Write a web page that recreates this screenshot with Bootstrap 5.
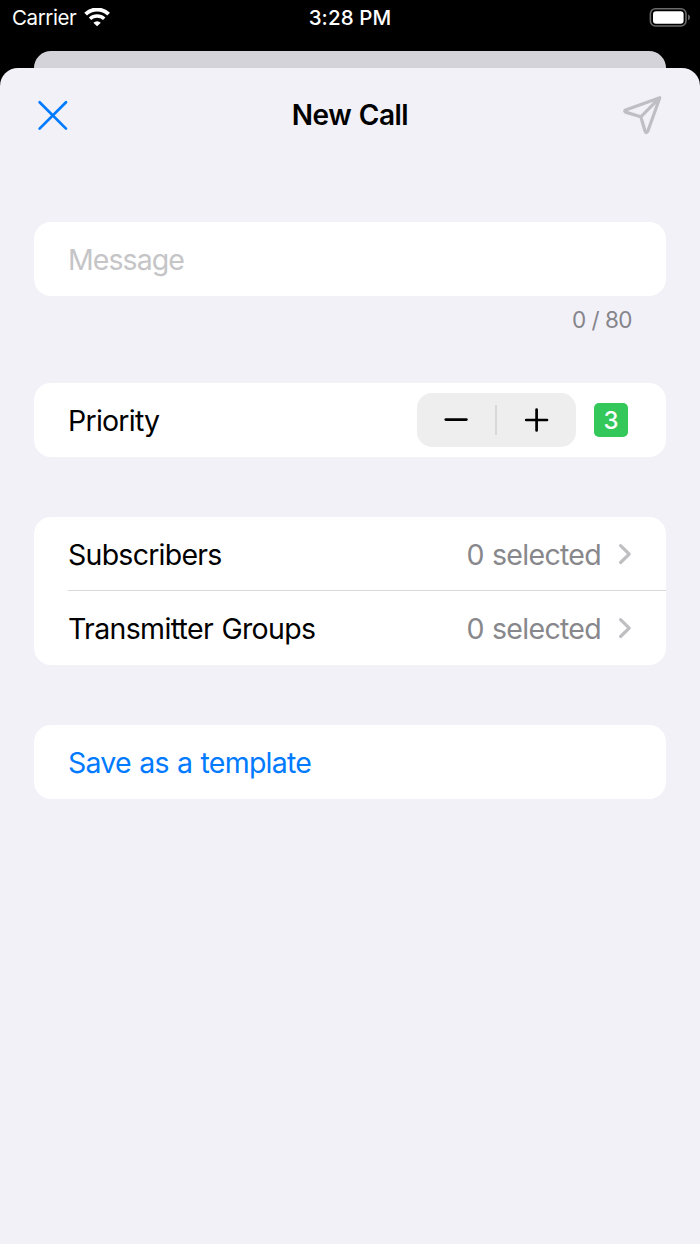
<!DOCTYPE html>
<html lang="en">
<head>
<meta charset="utf-8">
<meta name="viewport" content="width=device-width, initial-scale=1">
<title>New Call</title>
<link href="https://cdn.jsdelivr.net/npm/bootstrap@5.3.0/dist/css/bootstrap.min.css" rel="stylesheet">
<style>
  body { font-family: Inter, "Liberation Sans", sans-serif; background: #000; color: #000; font-size: 28.5px; line-height: 34px; }
  .screen { height: 1244px; overflow: hidden; }
  .status-bar { height: 51px; padding: 0 9px 0 12px; color: #fff; font-size: 20.5px; line-height: 36px; }
  .status-side { width: 200px; height: 36px; }
  .carrier { letter-spacing: -.4px; }
  .clock { font-weight: 500; letter-spacing: .1px; padding-right: 3px; }
  .back-sheet { height: 17px; margin: 0 34px; background: #d4d3d9; border-radius: 17px 17px 0 0; }
  .sheet { background: #f2f1f7; border-radius: 18px 18px 0 0; padding: 0 34px; }
  .title-bar { height: 94px; margin-bottom: 60px; }
  .title-bar h1 { font-size: 28px; font-weight: 600; letter-spacing: -.5px; word-spacing: 1px; padding-top: 2px; }
  .title-side { width: 60px; }
  .form-group-card { border: 0; border-radius: 17px; --bs-list-group-bg: #fff; --bs-list-group-color: #000; }
  .form-row { height: 74px; padding: 0 34px; letter-spacing: -.75px; word-spacing: 1px; }
  .row-text { padding-top: 2px; }
  .groups-label { letter-spacing: -.66px; }
  .form-row + .form-row::before { content: ""; position: absolute; top: -1px; left: 34px; right: 0; height: 1px; background: #d9d9dc; }
  .placeholder-text { color: #c5c5c7; letter-spacing: -.95px; }
  .counter { height: 87px; padding: 7px 34px 0; color: #85858b; font-size: 22.5px; letter-spacing: -.5px; }
  .gap-section { margin-bottom: 60px; }
  .stepper { width: 159px; height: 54px; background: #eee; border-radius: 15px; margin-right: 18px; }
  .stepper button { width: 78px; height: 54px; }
  .stepper .divider { width: 2px; height: 30px; background: #d8d8da; }
  .level { width: 34px; height: 34px; border-radius: 5px; background: #34c759; color: #fff; font-size: 24px; font-weight: 500; margin-right: 4px; padding-top: 1px; letter-spacing: 0; }
  .value { color: #88888c; letter-spacing: -.7px; }
  .chevron { margin-left: 16px; }
  .action { color: #007aff; }
</style>
</head>
<body>
<div class="screen d-flex flex-column">
  <header class="status-bar d-flex justify-content-between">
    <div class="status-side d-flex align-items-center">
      <span class="carrier">Carrier</span>
      <svg class="ms-2" width="27" height="20" viewBox="0 0 27 20" fill="none" stroke="#fff" aria-label="Wi-Fi">
        <path d="M1.6 6.1a16.8 16.8 0 0 1 23 0" stroke-width="4"/>
        <path d="M6 10.8a10.4 10.4 0 0 1 14.2 0" stroke-width="3.5"/>
        <path d="M13.1 18.3l-3.7-3.6a5.3 5.3 0 0 1 7.4 0z" fill="#fff" stroke="none"/>
      </svg>
    </div>
    <span class="clock">3:28 PM</span>
    <div class="status-side d-flex align-items-center justify-content-end">
      <svg width="42" height="20" viewBox="0 0 42 20" aria-label="Battery">
        <rect x="1.4" y=".8" width="35.6" height="17.2" rx="5" fill="none" stroke="#6b6b6b" stroke-width="1.6"/>
        <rect x="4" y="3.2" width="30.6" height="12.5" rx="3" fill="#fff"/>
        <path d="M39.2 6.5c2.2 1 2.2 4.8 0 5.8z" fill="#777"/>
      </svg>
    </div>
  </header>
  <div class="back-sheet"></div>
  <main class="sheet flex-grow-1">
    <div class="title-bar d-flex align-items-center justify-content-between">
      <button class="btn p-0 border-0 title-side text-start d-flex" aria-label="Close">
        <svg width="38" height="38" viewBox="0 0 38 38" fill="none" stroke="#007aff" stroke-width="2.7" stroke-linecap="round"><path d="M5.6 6.2l26.4 26.4M32 6.2L5.6 32.6"/></svg>
      </button>
      <h1 class="m-0">New Call</h1>
      <button class="btn p-0 border-0 title-side d-flex justify-content-end" aria-label="Send">
        <svg width="44" height="44" viewBox="0 0 44 44" fill="none" stroke="#bfbec4" stroke-width="3.2" stroke-linejoin="round"><path d="M37.8 4.7L3.6 16.9Q1.8 18 3.6 19.1L18.8 23.8L23.1 38.2Q24.2 40.8 25.7 38.5ZM18.8 23.8L37.8 4.7"/></svg>
      </button>
    </div>

    <div class="list-group form-group-card">
      <div class="list-group-item form-row border-0 d-flex align-items-center"><span class="row-text placeholder-text">Message</span></div>
    </div>
    <div class="counter text-end">0 / 80</div>

    <div class="list-group form-group-card gap-section">
      <div class="list-group-item form-row border-0 d-flex align-items-center">
        <span class="row-text me-auto">Priority</span>
        <div class="stepper d-flex align-items-center">
          <button class="btn p-0 border-0 d-flex align-items-center justify-content-center" aria-label="Decrease">
            <svg width="26" height="26" viewBox="0 0 26 26" stroke="#000" stroke-width="2.7" stroke-linecap="round"><path d="M2.8 12.6h20.6"/></svg>
          </button>
          <div class="divider"></div>
          <button class="btn p-0 border-0 d-flex align-items-center justify-content-center" aria-label="Increase">
            <svg width="26" height="26" viewBox="0 0 26 26" stroke="#000" stroke-width="2.7" stroke-linecap="round"><path d="M3.2 13h20.8M13.6 2.6v20.8"/></svg>
          </button>
        </div>
        <span class="level d-flex align-items-center justify-content-center">3</span>
      </div>
    </div>

    <div class="list-group form-group-card gap-section">
      <div class="list-group-item form-row border-0 d-flex align-items-center">
        <span class="row-text me-auto">Subscribers</span>
        <span class="row-text value">0 selected</span>
        <svg class="chevron" width="15" height="24" viewBox="0 0 15 24" fill="none" stroke="#bfbfc2" stroke-width="3.2" stroke-linecap="round" stroke-linejoin="round"><path d="M3.6 3.7L12.2 12.1L3.6 20.5"/></svg>
      </div>
      <div class="list-group-item form-row border-0 d-flex align-items-center">
        <span class="row-text me-auto groups-label">Transmitter Groups</span>
        <span class="row-text value">0 selected</span>
        <svg class="chevron" width="15" height="24" viewBox="0 0 15 24" fill="none" stroke="#bfbfc2" stroke-width="3.2" stroke-linecap="round" stroke-linejoin="round"><path d="M3.6 3.7L12.2 12.1L3.6 20.5"/></svg>
      </div>
    </div>

    <div class="list-group form-group-card">
      <a class="list-group-item form-row border-0 d-flex align-items-center action"><span class="row-text">Save as a template</span></a>
    </div>
  </main>
</div>
<script src="https://cdn.jsdelivr.net/npm/bootstrap@5.3.0/dist/js/bootstrap.bundle.min.js"></script>
</body>
</html>
